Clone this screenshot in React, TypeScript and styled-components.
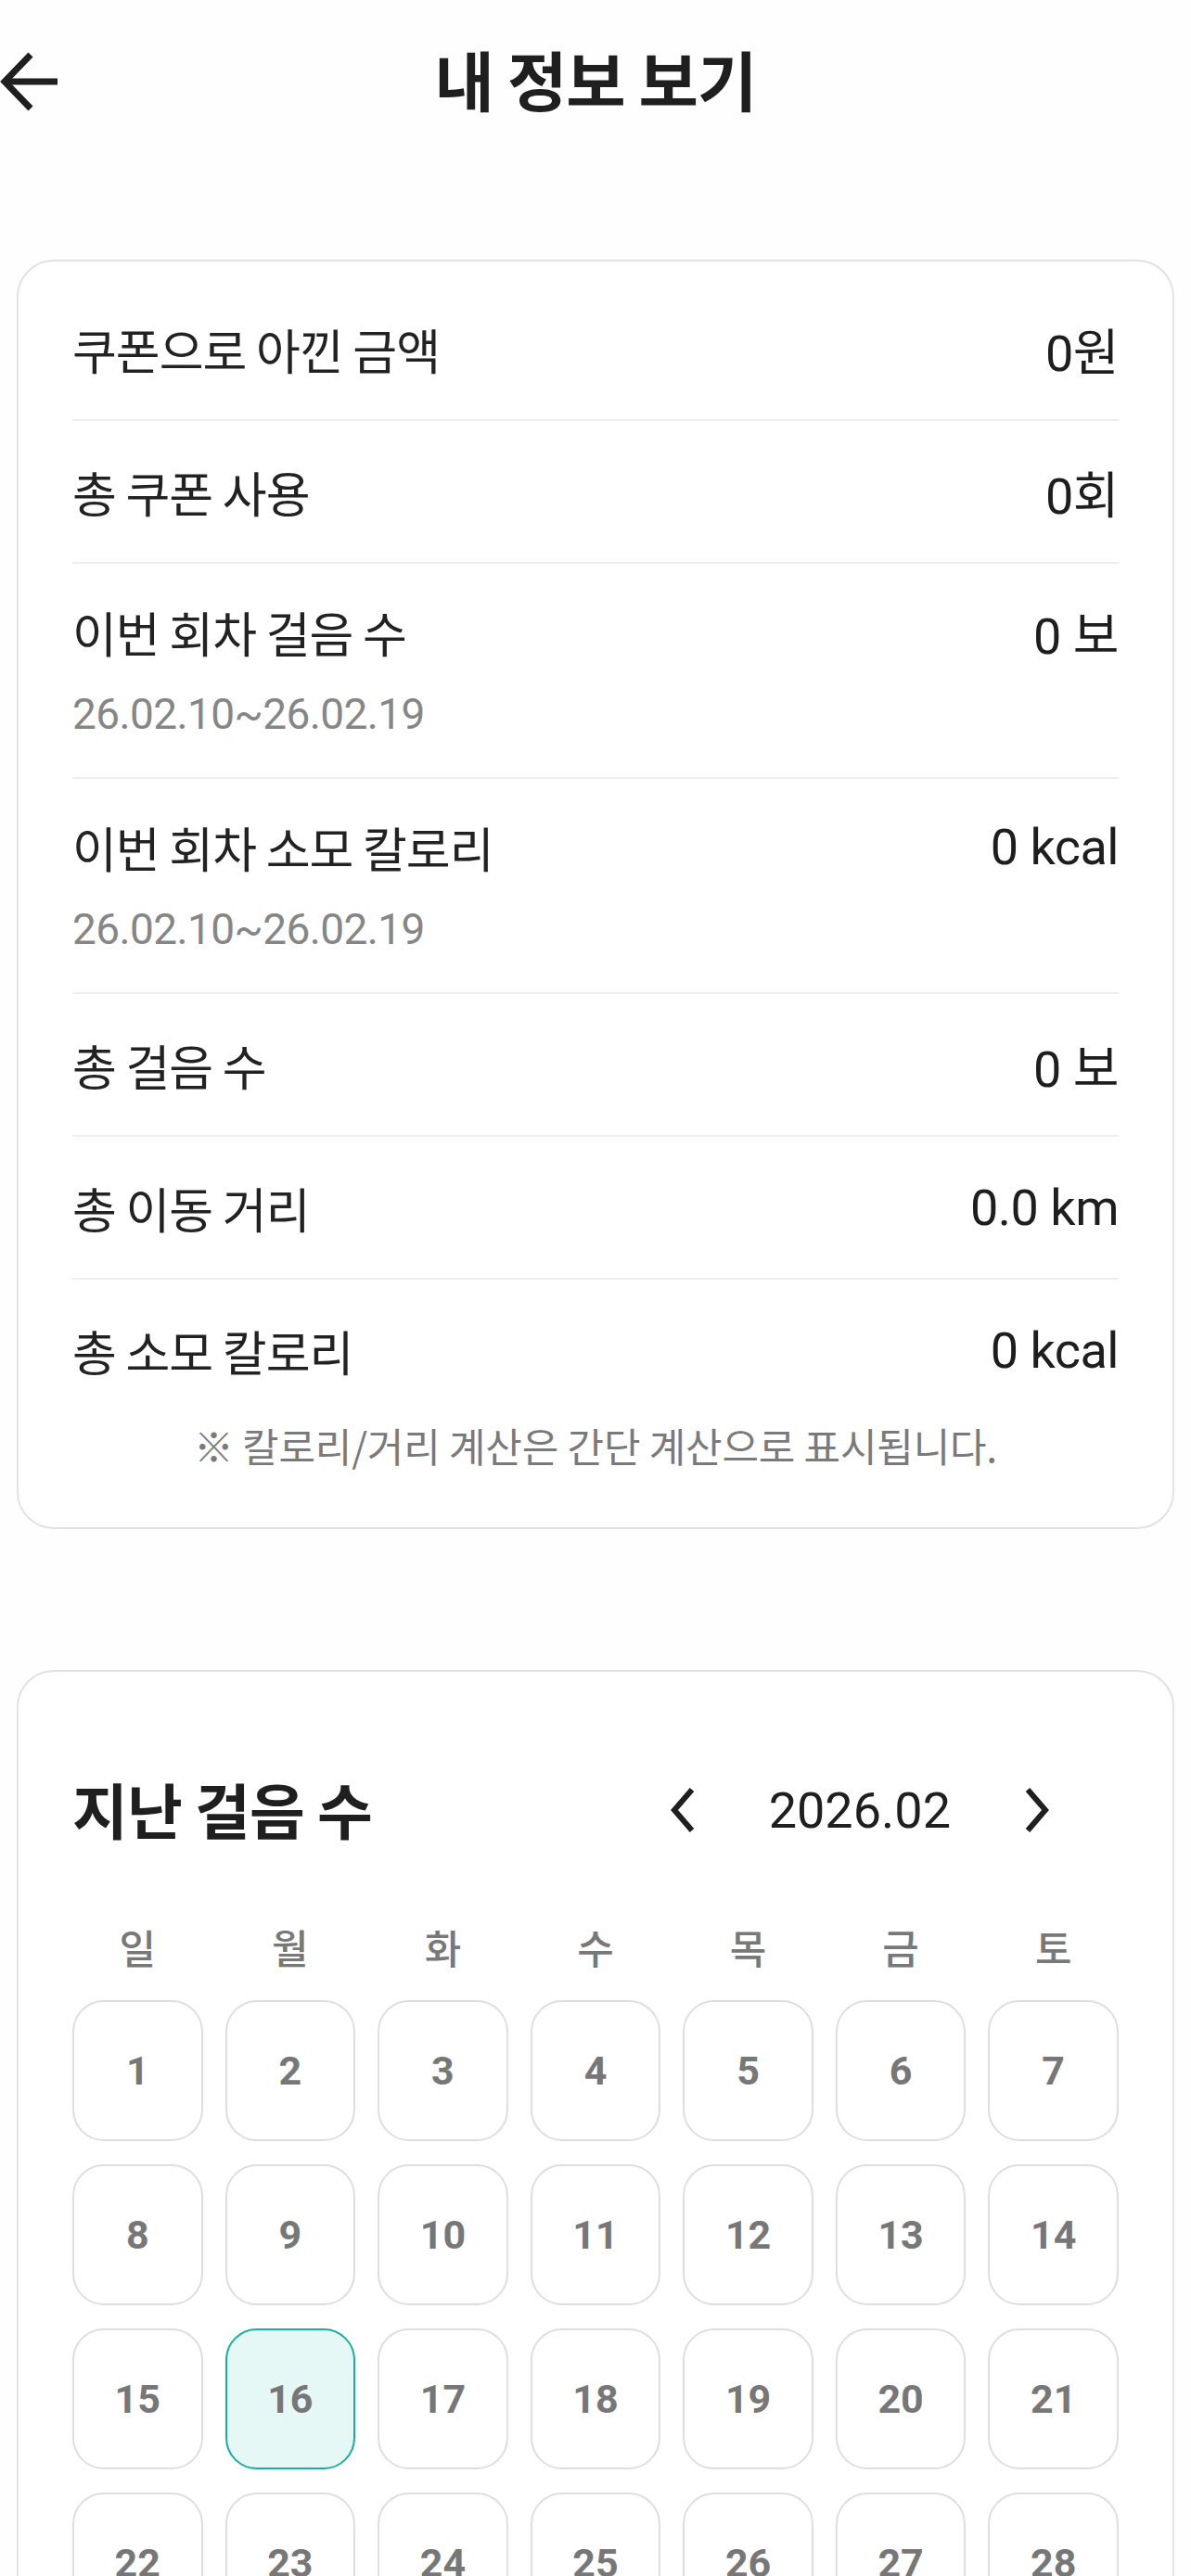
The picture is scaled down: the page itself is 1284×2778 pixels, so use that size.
import React from 'react'
import styled, { createGlobalStyle } from 'styled-components'

const GlobalStyle = createGlobalStyle`
  * { box-sizing: border-box; }
  body {
    margin: 0;
    background: #fefefe;
    color: #222;
    font-family: "Roboto", "Noto Sans CJK KR", sans-serif;
  }
`

const Page = styled.div`
  width: 1284px;
  min-height: 2778px;
`

const Header = styled.header`
  height: 176px;
  display: grid;
  grid-template-columns: 1fr auto 1fr;
  align-items: center;
`

const BackButton = styled.button`
  justify-self: start;
  width: 70px;
  height: 70px;
  padding: 0;
  border: 0;
  background: none;
  display: flex;
  align-items: center;
  color: #1f1f1f;
`

const Title = styled.h1`
  margin: 0 0 8px;
  font-family: "Noto Sans CJK KR", sans-serif;
  font-size: 70px;
  font-weight: 700;
  color: #1f1f1f;
  letter-spacing: -1px;
`

const Content = styled.main`
  padding: 104px 18px 0;
  display: flex;
  flex-direction: column;
  gap: 152px;
`

const Card = styled.section<{ $pad: string }>`
  background: #fff;
  border: 2px solid #e2e2e2;
  border-radius: 40px;
  padding: ${p => p.$pad};
`

const StatRow = styled.div<{ $last?: boolean; $hasSub?: boolean }>`
  padding: ${p => (p.$hasSub ? '45px 0' : '48px 0')};
  border-bottom: ${p => (p.$last ? 'none' : '2px solid #eeeeee')};
`

const StatMain = styled.div`
  display: flex;
  justify-content: space-between;
  align-items: center;
  height: 56px;
`

const Label = styled.span`
  font-family: "Noto Sans CJK KR", sans-serif;
  font-size: 52px;
  letter-spacing: -1px;
  color: #222;
`

const Value = styled.span`
  font-size: 54px;
  color: #1e1e1e;
  letter-spacing: -0.5px;
`

const SubText = styled.div`
  margin-top: 38px;
  height: 46px;
  line-height: 46px;
  font-size: 46px;
  color: #868686;
  letter-spacing: -0.6px;
`

const Footnote = styled.p`
  margin: 2px 0 0;
  line-height: 48px;
  text-align: center;
  font-family: "Noto Sans CJK KR", sans-serif;
  font-size: 43px;
  color: #7a7a7a;
  letter-spacing: -0.2px;
`

const CalHead = styled.div`
  height: 70px;
  display: flex;
  align-items: center;
  justify-content: space-between;
  margin-bottom: 89px;
`

const CalTitle = styled.h2`
  margin: 0;
  font-family: "Noto Sans CJK KR", sans-serif;
  font-size: 65px;
  font-weight: 700;
  color: #1f1f1f;
  letter-spacing: -0.8px;
`

const MonthNav = styled.div`
  display: flex;
  align-items: center;
  gap: 63px;
  margin-right: 58px;
  margin-top: 4px;
`

const NavButton = styled.button`
  width: 60px;
  height: 60px;
  padding: 0;
  border: 0;
  background: none;
  display: flex;
  align-items: center;
  justify-content: center;
  color: #1f1f1f;
`

const MonthText = styled.span`
  font-size: 54px;
  color: #1f1f1f;
`

const WeekRow = styled.div`
  display: grid;
  grid-template-columns: repeat(7, 1fr);
  column-gap: 24px;
  margin-bottom: 33px;
`

const WeekDay = styled.span`
  text-align: center;
  line-height: 50px;
  font-family: "Noto Sans CJK KR", sans-serif;
  font-size: 43px;
  font-weight: 500;
  color: #787878;
`

const DayGrid = styled.div`
  display: grid;
  grid-template-columns: repeat(7, 1fr);
  gap: 25px 24px;
`

const DayCell = styled.div<{ $active?: boolean }>`
  height: 152px;
  border-radius: 34px;
  border: 2px solid ${p => (p.$active ? '#17b09e' : '#dedede')};
  background: ${p => (p.$active ? '#e6f8f5' : '#fff')};
  display: flex;
  align-items: center;
  justify-content: center;
  font-size: 43px;
  font-weight: 700;
  color: #777;
`

const stats = [
  { label: '쿠폰으로 아낀 금액', value: '0원' },
  { label: '총 쿠폰 사용', value: '0회' },
  { label: '이번 회차 걸음 수', value: '0 보', sub: '26.02.10~26.02.19' },
  { label: '이번 회차 소모 칼로리', value: '0 kcal', sub: '26.02.10~26.02.19' },
  { label: '총 걸음 수', value: '0 보' },
  { label: '총 이동 거리', value: '0.0 km' },
  { label: '총 소모 칼로리', value: '0 kcal' },
]

const weekDays = ['일', '월', '화', '수', '목', '금', '토']
const days = Array.from({ length: 28 }, (_, i) => i + 1)

const App = () => {
  return (
    <>
      <GlobalStyle />
      <Page>
        <Header>
          <BackButton type="button" aria-label="뒤로">
            <svg width="66" height="66" viewBox="0 0 66 66" fill="none" stroke="currentColor" strokeWidth="7">
              <path d="M62 33 H8" />
              <path d="M33 4 L5 33 L33 62" />
            </svg>
          </BackButton>
          <Title>내 정보 보기</Title>
          <span />
        </Header>

        <Content>
          <Card $pad="18px 58px 65px">
            {stats.map((s, i) => (
              <StatRow key={s.label} $last={i === stats.length - 1} $hasSub={!!s.sub}>
                <StatMain>
                  <Label>{s.label}</Label>
                  <Value>{s.value}</Value>
                </StatMain>
                {s.sub && <SubText>{s.sub}</SubText>}
              </StatRow>
            ))}
            <Footnote>※ 칼로리/거리 계산은 간단 계산으로 표시됩니다.</Footnote>
          </Card>

          <Card $pad="112px 58px 80px">
            <CalHead>
              <CalTitle>지난 걸음 수</CalTitle>
              <MonthNav>
                <NavButton type="button" aria-label="이전 달">
                  <svg width="28" height="50" viewBox="0 0 28 50" fill="none" stroke="currentColor" strokeWidth="6">
                    <polyline points="24,3 5,25 24,47" />
                  </svg>
                </NavButton>
                <MonthText>2026.02</MonthText>
                <NavButton type="button" aria-label="다음 달">
                  <svg width="28" height="50" viewBox="0 0 28 50" fill="none" stroke="currentColor" strokeWidth="6">
                    <polyline points="4,3 23,25 4,47" />
                  </svg>
                </NavButton>
              </MonthNav>
            </CalHead>
            <WeekRow>
              {weekDays.map(d => (
                <WeekDay key={d}>{d}</WeekDay>
              ))}
            </WeekRow>
            <DayGrid>
              {days.map(d => (
                <DayCell key={d} $active={d === 16}>{d}</DayCell>
              ))}
            </DayGrid>
          </Card>
        </Content>
      </Page>
    </>
  )
}

export default App
